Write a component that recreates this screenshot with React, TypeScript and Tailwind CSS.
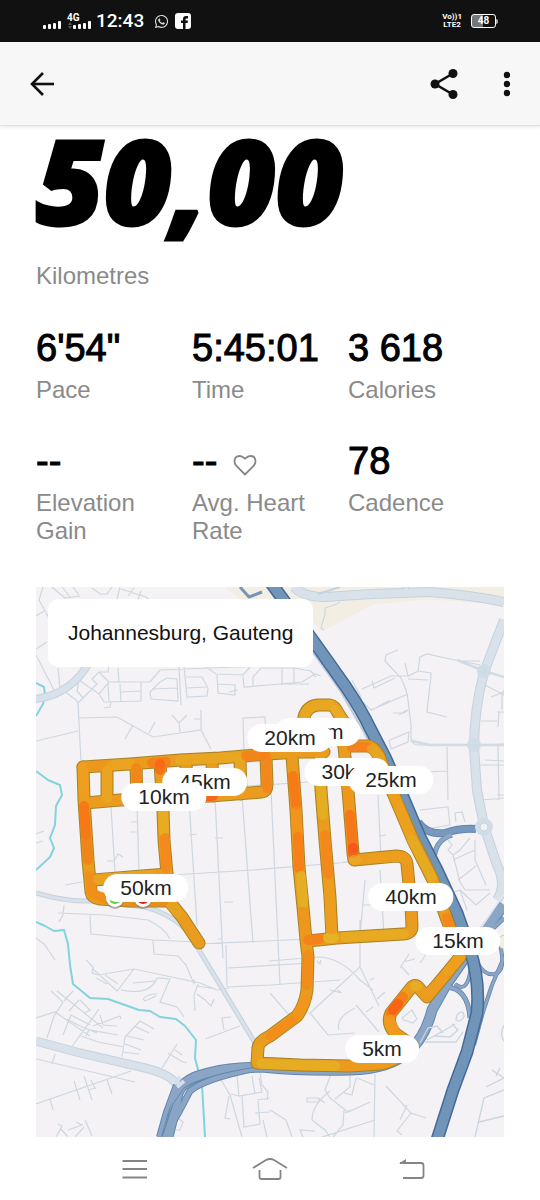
import React from "react";
import { FaWhatsapp } from "react-icons/fa";

type Stat = { value: string; label: string; heart?: boolean };

const stats: Stat[] = [
  { value: "6'54\"", label: "Pace" },
  { value: "5:45:01", label: "Time" },
  { value: "3 618", label: "Calories" },
  { value: "--", label: "Elevation Gain" },
  { value: "--", label: "Avg. Heart Rate", heart: true },
  { value: "78", label: "Cadence" },
];

type Marker = { text: string; x: number; y: number; shape?: string };

// Marker centres in map units; later entries lie over earlier ones.
// Markers that are partly covered keep only the part of the label left in view.
const markers: Marker[] = [
  { text: "m", x: 318, y: 732, shape: "w-[85px] text-right" },
  { text: "20km", x: 290, y: 738 },
  { text: "30k", x: 347, y: 772, shape: "w-[85px] text-left" },
  { text: "25km", x: 391, y: 780 },
  { text: "45km", x: 205, y: 782 },
  { text: "10km", x: 164, y: 797 },
  { text: "50km", x: 146, y: 888 },
  { text: "40km", x: 411, y: 897 },
  { text: "15km", x: 458, y: 941 },
  { text: "5km", x: 382, y: 1049 },
];

const MAP = { x: 36, y: 587, w: 468, h: 550 };

const track = [
  "M83 767 L130 764 L180 760 L220 758 L267 754 L300 752 L324 752",
  "M83 767 L84 800 L88 860 L91 892 Q92 898 100 899 L130 901 L169 901 L182 917 L199 943",
  "M85 803 L120 800 L210 796 L262 792 Q267 791 267 784 L266 756",
  "M107 767 L107 800",
  "M136 765 L137 800",
  "M160 763 L163 810 L164 840 L167 874",
  "M186 762 L187 798",
  "M212 760 L213 796",
  "M240 758 L241 794",
  "M94 880 L130 877 L167 874",
  "M292 756 L296 810 L299 867 L303 907 L306 940 L308 957 L307 990 Q305 1005 297 1016 L270 1036 Q258 1042 258 1048 L257 1063 L300 1065 L350 1066 L380 1064 Q400 1060 412 1045 L396 1034 Q386 1024 391 1013 L399 1003 L411 988 Q415 983 419 988 L427 997 L447 973 L460 957 L463 942",
  "M320 753 L321 790 L325 840 L330 897 L332 937",
  "M306 726 L304 717 Q307 706 318 705 L330 705 Q335 706 338 713 L346 725 L351 740",
  "M344 746 L348 790 L353 853 L354 860 L396 856 Q406 856 407 864 L411 905 L412 926 Q412 934 403 934 L337 938 L308 941",
  "M344 746 L360 746 L368 746 Q374 747 379 756 L393 793 L413 840 L433 880 L447 920 L456 943",
];

const heat: [string, string][] = [
  ["M83 768 L84 795", "#efa11f"],
  ["M84 806 L86 835", "#fb6a13"],
  ["M86 835 L88 860", "#f27d18"],
  ["M90 876 L92 893 L106 899", "#f48a1a"],
  ["M92 767 L110 765", "#f0951d"],
  ["M107 771 L107 798", "#e9a822"],
  ["M112 765 L130 764", "#eda61f"],
  ["M136 768 L137 786", "#f47d17"],
  ["M152 763 L166 762", "#f7761a"],
  ["M160 764 L160 770", "#fb5f12"],
  ["M180 760 L238 757", "#e7ab22"],
  ["M240 760 L241 790", "#e8a923"],
  ["M246 756 L264 755", "#f57c17"],
  ["M266 756 L267 788", "#f5801a"],
  ["M204 796 L213 796", "#f8501c"],
  ["M163 812 L164 832", "#e5b323"],
  ["M165 838 L166 868", "#f6831a"],
  ["M98 879 L150 875", "#e7a621"],
  ["M115 901 L164 901", "#e8881c"],
  ["M172 906 L177 912", "#e5a720"],
  ["M293 776 L296 805", "#fb6d14"],
  ["M296 812 L298 835", "#f3931c"],
  ["M298 837 L299 868", "#fb7615"],
  ["M301 876 L303 903", "#e4b724"],
  ["M303 912 L305 930", "#f0961c"],
  ["M308 940 L320 939", "#fa7817"],
  ["M328 938 L334 938", "#e4bd29"],
  ["M345 937 L404 934", "#e5b022"],
  ["M308 955 L307 985", "#f4871a"],
  ["M306 999 L296 1016", "#f3941b"],
  ["M292 1021 L270 1036", "#f58a1a"],
  ["M258 1050 L257 1060", "#e3a821"],
  ["M262 1064 L335 1066", "#e4b323"],
  ["M348 1066 L384 1063", "#f09a1d"],
  ["M321 788 L323 815", "#e2b523"],
  ["M325 835 L328 874", "#f6821a"],
  ["M329 885 L331 930", "#efa01d"],
  ["M348 790 L351 825", "#f0951c"],
  ["M350 815 L353 848", "#fb6815"],
  ["M353 848 L353 853", "#fb4b19"],
  ["M354 860 L356 860", "#edab25"],
  ["M372 858 L396 857", "#f0a01d"],
  ["M408 870 L409 880", "#ee961c"],
  ["M352 747 L368 747", "#f8761a"],
  ["M372 749 L380 758", "#e4a923"],
  ["M393 793 L410 834", "#eda31e"],
  ["M412 840 L432 878", "#e4b021"],
  ["M447 918 L450 926", "#f5801a"],
  ["M305 716 Q308 706 318 705 L330 705", "#e5ad22"],
  ["M336 710 L344 722", "#eab02a"],
  ["M460 957 L448 971", "#eea31e"],
  ["M442 979 L430 992", "#ee9d1f"],
  ["M415 986 L417 986", "#e6b426"],
  ["M403 997 L391 1013", "#fa7417"],
  ["M398 1004 L393 1010", "#fb5716"],
  ["M390 1020 L396 1033", "#f39a1c"],
];

const streets =
  "M43 587 L39 600 L61 640 M36 616 L44 611 M36 649 L47 642 M36 655 L58 698 M58 668 L60 688 L76 700 L78 703 L81 762 M52 587 L65 598 L80 596 M62 587 L70 597 M73 587 L79 595 M92 588 L100 594 L107 594 L112 587 M120 587 L117 599 M121 589 L146 597 L150 600 M128 596 L134 588 M138 599 L141 591" +
  " M78 703 L97 684 L92 679 L99 672 L109 682 L99 694 L79 680 L77 691 L83 698 M109 682 L150 682 L160 670 L235 667 L270 666 M99 672 L108 672 L109 665 M118 668 L119 683 M108 684 L109 701 M120 684 L121 702 M108 702 L141 701 L141 682 M120 692 L141 691 M99 694 L104 702 L109 702 M104 708 L110 707 L111 701 M150 692 L160 682 L167 678 L177 679 L178 701 L151 699 L150 692 M152 689 L178 688 M179 667 L181 705 M184 666 L187 697 L207 696 L208 688 L202 677 L186 677 M187 688 L207 687 M203 665 L216 674 L243 675 L250 667 M217 675 L218 693 L235 695 L235 685 L217 684 M229 692 L238 690 M243 676 L244 687 L281 684 L309 684 M253 686 L253 677 L261 668 L294 668 L294 684 M282 669 L282 685 M280 684 L302 682 L315 674 L321 676 M294 668 L311 671 L316 677" +
  " M78 718 L117 717 L153 737 L201 730 L211 749 M36 741 L78 731 M125 739 L133 725 M149 733 L155 722 M180 732 L179 723 L172 715 M179 723 L187 715 M201 730 L201 710 M194 719 L201 719 M244 752 L243 718 L265 717 L266 740" +
  " M111 807 L115 872 M137 805 L139 872 M189 801 L197 925 M215 798 L223 958 M242 796 L253 943 M271 790 L280 985 M346 808 L353 852 M378 795 L381 860 M365 880 L360 936 M380 870 L384 935 M172 875 L253 870 L350 862 M199 944 L310 939 M227 987 L226 945 M228 968 L310 963 M228 987 L270 985 M131 822 L138 822 M130 832 L137 832 M189 835 L197 834 M215 838 L223 838 M224 902 L233 902 M218 939 L222 939 M107 861 L114 861 L118 854 L123 857 M65 885 L82 882 M36 834 L44 831 M36 843 L43 841 M247 786 L309 782 M343 862 L390 860 M380 836 L386 835 M372 905 L363 905" +
  " M58 913 L105 915 L148 920 Q165 928 170 939 M64 905 L63 915 L59 922 M90 915 L91 934 L153 940 L197 942 M153 940 L154 954 L178 956 L186 965 L194 984 L194 979 M86 960 L93 967 L92 973 L98 975 L134 969 L200 983 L217 990 L229 988 M92 968 L117 991 L134 969 M96 978 L107 984 M105 975 L118 984 M121 990 Q150 996 157 978 L170 979 L160 1002 L177 1007 L184 1017 M133 983 L155 981 M156 996 L145 1001 L143 999 Q147 994 157 994 M198 984 L194 995 L195 1011 M197 994 L205 1000 L211 1006 L214 999 M197 986 L216 989 M205 1039 L240 1026 M231 1017 L222 1018 L224 1030 M36 938 L45 945 L55 960" +
  " M36 1018 L55 1012 L90 1036 M47 1038 L54 1016 L63 1002 L51 991 M64 1001 L73 991 M57 991 L103 1028 M63 1035 L71 1015 L90 1025 M71 1048 L99 1009 M80 1000 L90 1010 L84 1013 M69 1011 L79 1000 M67 1019 L80 1026 L97 1033 M93 1026 L120 1016 L121 1019 M100 1015 L103 1025 L117 1026 M81 1036 L98 1042 L124 1047 M86 1036 L89 1030 L118 1035 M122 1057 L125 1037 L140 1021 L154 1029 M134 1026 L149 1033 M127 1036 L144 1040 M125 1044 L141 1050 M122 1052 L139 1054 M162 1068 L177 1044 M168 1053 L181 1061 L187 1063 M175 1050 L182 1055" +
  " M36 1104 L131 1071 M36 1059 L135 1082 M52 1064 L55 1054 M74 1081 L80 1100 M84 1076 L92 1100 M88 1090 L96 1088 M107 1080 L112 1094 M91 1080 L95 1088 M50 1099 L53 1110 M56 1137 L62 1126 L58 1124 M60 1128 L68 1137 M68 1130 L82 1125 L76 1122 M75 1137 L84 1127 M85 1120 L92 1136" +
  " M269 961 L318 957 Q340 957 360 980 L373 990 M360 920 L360 967 L309 1014 M360 967 L379 1006 M270 985 L340 980 M330 990 L342 993 M338 990 L341 993 M317 961 L320 964 L321 960 M356 1005 L379 1032 M339 1030 Q335 1018 355 1008 M311 1014 L328 1035 L355 1033 M370 980 L374 978 M366 1012 L373 1007 M377 999 L385 992 M401 966 L409 975 M403 962 L415 959 M420 963 L427 953 M402 1018 L412 1010 L417 1019 L413 1023 L404 1020 Z M270 993 L295 1022 M409 954 L400 968" +
  " M331 1074 L325 1090 L330 1098 L348 1112 L370 1102 M350 1075 L350 1087 L335 1099 M356 1078 L352 1095 L344 1093 M375 1074 L374 1137 M374 1085 L357 1078 M330 1091 Q312 1105 312 1120 L325 1130 L330 1137 M344 1110 L343 1125 L333 1137 M345 1113 L351 1110 M307 1098 L319 1098 L319 1102 L307 1102 Z M386 1086 L411 1113 L426 1118 M411 1113 L397 1131 L402 1135 M407 1105 L400 1120 M325 1103 L318 1098 M315 1131 L300 1130 L303 1137 M270 1110 L286 1120 L292 1137 M313 1140 L375 1120" +
  " M220 1078 L230 1095 L242 1137 M237 1076 L239 1096 L262 1092 L259 1078 M252 1076 L255 1094 M242 1096 L244 1127 L260 1124 L258 1101 M260 1073 L262 1085 L268 1092 L267 1100 M257 1100 L270 1098 M255 1113 L270 1112 M229 1096 L225 1118 L230 1119 M181 1099 L175 1116 L183 1122 L180 1130 L171 1130 M263 1120 L267 1137 M231 1094 L239 1096" +
  " M325 608 L325 614 L321 628 L324 630 M325 608 L337 604 L340 602 M398 650 L386 655 L385 661 L401 678 Q407 690 408 700 L411 725 L411 740 Q412 745 420 745 L465 745 M405 663 L408 676 L418 671 L420 657 L427 654 L450 659 L480 665 M362 689 L391 676 L408 676 M372 681 L374 688 L395 678 M418 671 L431 673 L431 676 L427 712 L447 717 M408 679 L428 680 M352 680 L360 695 L362 702 M363 702 L371 710 L408 694 M372 710 L390 700 M399 715 L407 710 M393 713 L404 713 L408 710 M389 740 L391 749 L408 742 L409 732 L390 740 M447 747 L448 800 M425 772 L448 771 M460 661 L480 661 M504 695 L485 685 M481 721 L497 721 M485 760 L504 761 M480 765 L504 765 M497 712 L504 712 M498 745 L499 800 M499 712 L498 727 M485 745 L504 744 M482 800 L504 798 M497 795 L504 795 M420 810 L448 807 L450 825 L432 828 M456 822 L455 813 L462 812 L465 822 M445 836 L452 845 L448 850 L453 855 L460 850 L470 838 M453 855 L460 882 L465 890 L490 890 M475 840 L475 860 L486 885 M453 860 L475 850 M458 880 L476 866 M446 895 L460 890 L467 910 M460 890 L476 905 L490 893 M491 697 L504 692 M502 710 L502 695 L504 690";

const westRoads =
  "M168 1137 L173 1117 L178 1093 Q182 1082 198 1076 Q220 1069 240 1068 L262 1067 Q300 1071 350 1070 Q390 1069 408 1052 Q425 1038 432 1010 L446 985 L478 939 L504 905";

function Streams() {
  return (
    <g fill="none" stroke="#83d3df" strokeWidth="2" strokeLinejoin="round">
      <path d="M36 771 L48 780 L60 785 L62 795 L56 806 L55 825 L50 838 L54 848 L50 857 L36 870" />
      <path d="M36 922 L45 926 L54 931 L64 930 L68 944 L70 965 L73 984 L90 998 L108 999 L139 1010 L150 1011 L160 1017 L176 1019 L185 1026 L196 1040 L195 1058 L202 1085 L205 1137" />
      <path d="M36 683 L44 687 L45 695 L43 704 L36 716" />
    </g>
  );
}

function RouteMap() {
  return (
    <svg
      viewBox="36 587 468 550"
      className="block h-auto w-full"
      role="img"
      aria-label="Route map"
    >
      <rect x="36" y="587" width="468" height="550" fill="#f4f2f4" />
      <path d="M225 587 L504 587 L504 604 L420 600 L370 606 L322 632 L312 620 L240 600 Z" fill="#f3eee4" />
      <path d="M315 635 L375 604 L440 600 L504 606 L504 700 L340 690 Z" fill="#f4f2f4" />
      <path d={streets} fill="none" stroke="#ced7e0" strokeWidth="1.2" />
      <Streams />

      <g fill="none" strokeLinecap="butt">
        <g stroke="#c5d1dd">
          <path d="M36 699 Q72 694 90 661" strokeWidth="8" />
          <path d="M36 893 Q65 902 90 901 L145 907 Q175 915 190 935 L255 1043" strokeWidth="5" />
          <path d="M36 1041 L80 1053 L145 1068 Q170 1074 176 1084" strokeWidth="9" />
          <path d="M294 587 Q303 597 325 597 L372 594 L430 592 Q470 595 504 602" strokeWidth="10" />
          <path d="M406 587 L406 594" strokeWidth="6" />
          <path d="M504 620 L484 672 Q474 710 474 748 L477 790 L484 826 L497 865 Q507 885 497 900" strokeWidth="10" />
        </g>
        <g stroke="#d9e2ea">
          <path d="M36 699 Q72 694 90 661" strokeWidth="6" />
          <path d="M36 893 Q65 902 90 901 L145 907 Q175 915 190 935 L255 1043" strokeWidth="3" />
          <path d="M36 1041 L80 1053 L145 1068 Q170 1074 176 1084" strokeWidth="7" />
          <path d="M294 587 Q303 597 325 597 L372 594 L430 592 Q470 595 504 602" strokeWidth="8" />
          <path d="M406 587 L406 594" strokeWidth="4" />
          <path d="M504 620 L484 672 Q474 710 474 748 L477 790 L484 826 L497 865 Q507 885 497 900" strokeWidth="8" />
        </g>
      </g>
      <path d="M318 594 L340 587" stroke="#c5d1dd" strokeWidth="2" />
      <circle cx="484" cy="671" r="7" fill="#d0dce6" />
      <circle cx="484" cy="671" r="2" fill="#f3f2f4" stroke="#b9c7d4" strokeWidth="0.7" />
      <circle cx="474" cy="745" r="7" fill="#d0dce6" />
      <path d="M457 660 L484 671 L504 677 M412 741 L430 745 L504 745" fill="none" stroke="#cfdbe5" strokeWidth="2.5" />

      <g fill="none" strokeLinejoin="round">
        <g stroke="#6485ad">
          <path d={westRoads} strokeWidth="11" />
          <path d="M164 1137 L179 1112 L190 1091 Q205 1078 262 1067" strokeWidth="7" />
          <path d="M159 1137 L166 1112 L176 1085" strokeWidth="6" />
          <path d="M418 822 Q427 835 445 833 Q460 828 476 829" strokeWidth="8" />
          <path d="M434 862 Q434 840 452 835" strokeWidth="5" />
          <path d="M504 918 Q485 935 474 950" strokeWidth="5" />
          <path d="M446 987 Q468 988 470 1018" strokeWidth="5" />
          <path d="M455 984 Q468 995 471 966" strokeWidth="4" />
          <path d="M498 938 Q508 970 495 974 Q485 976 478 964" strokeWidth="4" />
          <path d="M504 957 L492 985 L483 1012 L474 1045" strokeWidth="4" />
        </g>
        <g stroke="#8aa5c5">
          <path d={westRoads} strokeWidth="9" />
          <path d="M164 1137 L179 1112 L190 1091 Q205 1078 262 1067" strokeWidth="5" />
          <path d="M159 1137 L166 1112 L176 1085" strokeWidth="4" />
          <path d="M418 822 Q427 835 445 833 Q460 828 476 829" stroke="#7898bd" strokeWidth="6" />
          <path d="M434 862 Q434 840 452 835" strokeWidth="3.5" />
          <path d="M504 918 Q485 935 474 950" strokeWidth="3.5" />
          <path d="M446 987 Q468 988 470 1018" strokeWidth="3.5" />
          <path d="M455 984 Q468 995 471 966" strokeWidth="2.5" />
          <path d="M498 938 Q508 970 495 974 Q485 976 478 964" strokeWidth="2.5" />
          <path d="M504 957 L492 985 L483 1012 L474 1045" strokeWidth="2.5" />
        </g>
        <path d="M162 1137 L173 1104 L184 1088 Q200 1076 262 1066" stroke="#6485ad" strokeWidth="1" />
        <path d="M504 894 L480 929" stroke="#dfe6ee" strokeWidth="2" />
        <path d="M240 587 L249 597 L262 592" stroke="#7795b9" strokeWidth="3" />
        <path
          d="M262 580 L300 634 L341 692 L364 732 L386 778"
          stroke="#bccadb"
          strokeWidth="2"
        />
        <path
          d="M269 580 L317 646 L346 687 Q362 711 370 728 L385 757 L403 797 L420 837 L437 870 L457 913 L470 950 Q480 980 477 1013 L467 1052 L453 1090 L437 1140"
          stroke="#456a99"
          strokeWidth="13"
        />
        <path
          d="M269 580 L317 646 L346 687 Q362 711 370 728 L385 757 L403 797 L420 837 L437 870 L457 913 L470 950 Q480 980 477 1013 L467 1052 L453 1090 L437 1140"
          stroke="#7095b8"
          strokeWidth="10"
        />
      </g>
      <path d="M176 1084 L180 1077 M177 1087 L184 1081" stroke="#d3dfe9" strokeWidth="4" />
      <circle cx="484" cy="827" r="9" fill="#d0dde8" />
      <circle cx="484" cy="827" r="4" fill="#f1f2f0" stroke="#b9c7d4" strokeWidth="0.7" />
      <circle cx="505" cy="942" r="7" fill="#f3eee0" stroke="#c5cbd0" />
      <path
        d="M420 1043 L428 1028 L437 1026 L443 1033 M427 1040 L445 1030 L455 1024 M435 1036 L450 1037 L458 1030 L452 1024 M457 1015 Q464 1008 464 1017 Q460 1023 456 1020 Z M425 1042 L456 1042 L463 1032 M504 1025 Q499 1035 504 1041 M486 1087 L504 1078 M492 1070 L504 1078 M496 1076 L500 1068 M475 1137 L484 1098 L504 1090 M479 1122 L504 1116"
        fill="none"
        stroke="#cbd5df"
        strokeWidth="1.3"
      />

      <g fill="none" strokeLinecap="round" strokeLinejoin="round">
        {track.map((d) => (
          <path key={d} d={d} stroke="#a58326" strokeWidth="13" />
        ))}
        {track.map((d) => (
          <path key={d} d={d} stroke="#ea9c1e" strokeWidth="11" />
        ))}
        {heat.map(([d, color]) => (
          <path key={d} d={d} stroke={color} strokeWidth="10" strokeOpacity="0.7" />
        ))}
      </g>

      <g>
        <circle cx="115" cy="900" r="9" fill="#8d8170" opacity="0.6" />
        <circle cx="143" cy="900" r="9" fill="#8d8170" opacity="0.6" />
        <circle cx="115" cy="898" r="9" fill="#fff" />
        <circle cx="143" cy="898" r="9" fill="#fff" />
        <circle cx="115" cy="898" r="6" fill="#55d43c" />
        <circle cx="143" cy="898" r="6" fill="#e01f1f" />
      </g>
    </svg>
  );
}

function StatusBar() {
  return (
    <div className="flex h-[42px] items-center justify-between bg-[#111111] pl-[43px] pr-[42px] text-white">
      <div className="flex items-center">
        <svg width="49" height="18" viewBox="0 0 49 18" aria-hidden="true">
          <g fill="#fff">
            <rect x="0" y="13" width="3" height="4" rx="1" />
            <rect x="5" y="12" width="3" height="5" rx="1" />
            <rect x="10" y="11" width="3" height="6" rx="1" />
            <rect x="15" y="9" width="3" height="8" rx="1" />
            <rect x="30" y="13" width="3" height="4" rx="1" />
            <rect x="35" y="12" width="3" height="5" rx="1" />
            <rect x="40" y="11" width="3" height="6" rx="1" />
            <rect x="45" y="9" width="3" height="8" rx="1" />
          </g>
          <path d="M25 13 L27 10 L29 13 M25 14 L27 17 L29 14" fill="#555" />
          <text x="24" y="9" fill="#fff" fontSize="10" fontWeight="700" fontFamily="Roboto, sans-serif">
            4G
          </text>
        </svg>
        <span className="ml-[4px] font-[Roboto,sans-serif] text-[19px] leading-6 font-medium">12:43</span>
        <FaWhatsapp className="ml-[10px] h-[15px] w-[15px] text-[#dddddd]" aria-hidden="true" />
        <svg width="16" height="16" viewBox="0 0 16 16" className="ml-[6px]" aria-hidden="true">
          <rect width="16" height="16" rx="3" fill="#fff" />
          <path d="M8 16 V10 H6 V7.4 H8 V6 Q8 3 11 3 H13 V5.4 H11.7 Q10.5 5.4 10.5 6.6 V7.4 H13 L12.6 10 H10.5 V16 Z" fill="#111" />
        </svg>
      </div>
      <div className="flex items-center gap-[9px]">
        <div className="flex flex-col items-center font-[Roboto,sans-serif] text-[8px] leading-[8px] font-bold">
          <span>Vo))1</span>
          <span>LTE2</span>
        </div>
        <div className="flex items-center">
          <div className="flex h-[14px] w-[25px] items-center justify-center rounded-[3px] border border-white bg-linear-to-r from-[#777777] from-48% to-[#111111] to-48% font-[Roboto,sans-serif] text-[10px] leading-3 font-bold">
            48
          </div>
          <div className="h-[5px] w-[2px] rounded-r bg-[#aaaaaa]" />
        </div>
      </div>
    </div>
  );
}

function Header() {
  return (
    <header className="flex h-[84px] items-center justify-between border-b border-[#e0e0e0] bg-[#f7f7f7] pr-6 pl-[30px] shadow-[0_1px_4px_rgba(0,0,0,0.1)]">
      <button type="button" aria-label="Back">
        <svg width="24" height="24" viewBox="0 0 24 24" fill="none" stroke="#111" strokeWidth="2.6">
          <path d="M24 12 H2" />
          <path d="M13 1 L2 12 L13 23" />
        </svg>
      </button>
      <div className="flex items-center gap-10">
        <button type="button" aria-label="Share">
          <svg width="28" height="30" viewBox="0 0 28 30" fill="#111">
            <path d="M23 4.500 L5 15 L23 25.500" fill="none" stroke="#111" strokeWidth="2.6" />
            <circle cx="23" cy="4.500" r="4.500" />
            <circle cx="5" cy="15" r="4.500" />
            <circle cx="23" cy="25.500" r="4.500" />
          </svg>
        </button>
        <button type="button" aria-label="More options" className="px-[6px]">
          <svg width="14" height="26" viewBox="0 0 14 26" fill="#111" className="-mx-1">
            <circle cx="7" cy="4" r="3.200" />
            <circle cx="7" cy="13" r="3.200" />
            <circle cx="7" cy="22" r="3.200" />
          </svg>
        </button>
      </div>
    </header>
  );
}

function Heart() {
  return (
    <svg
      width="24"
      height="22"
      viewBox="0 0 24 22"
      fill="none"
      stroke="#858585"
      strokeWidth="1.8"
      className="mt-2"
      aria-hidden="true"
    >
      <path d="M12 20.500 L3.200 11.700 Q1.500 9.800 1.500 7.300 Q1.500 2 6.700 2 Q9 2 12 4.700 Q15 2 17.300 2 Q22.500 2 22.500 7.300 Q22.500 9.800 20.800 11.700 Z" />
    </svg>
  );
}

function NavBar() {
  return (
    <nav className="flex h-[63px] items-center justify-between px-[107px]">
      <button type="button" aria-label="Recent apps" className="flex w-14 justify-center">
        <svg width="26" height="22" viewBox="0 0 26 22" stroke="#858585" strokeWidth="1.8">
          <path d="M0.500 3 H25 M0.500 11 H25 M0.500 19.500 H25" />
        </svg>
      </button>
      <button type="button" aria-label="Home" className="flex w-14 justify-center">
        <svg width="36" height="24" viewBox="0 0 36 24" fill="none" stroke="#858585" strokeWidth="1.8">
          <path d="M1 11 L14 3 Q18 1 22 3 L35 11" />
          <path d="M7.500 13 V20 Q7.500 22 9.500 22 H26.500 Q28.500 22 28.500 20 V13" />
        </svg>
      </button>
      <button type="button" aria-label="Back to previous screen" className="flex w-14 justify-end pr-2">
        <svg width="26" height="22" viewBox="0 0 26 22" fill="none" stroke="#858585" strokeWidth="1.800">
          <path d="M1 5 H22 Q24.500 5 24.500 7.500 V17.500 Q24.500 20 22 20 H4" />
          <path d="M0 5.500 L7 1 V5.500 Z" fill="#858585" stroke="none" />
        </svg>
      </button>
    </nav>
  );
}

export default function App() {
  return (
    <div className="bg-white font-['Liberation_Sans',Arial,sans-serif] text-black">
      <StatusBar />
      <Header />
      <main className="px-9">
        <h1 className="h-[136px] font-['Open_Sans',sans-serif] text-[117px] leading-[108px] font-extrabold italic [-webkit-text-stroke:3px_black]">
          50,00
        </h1>
        <p className="text-2xl leading-7 text-[#8a8a8a]">Kilometres</p>
        <dl className="mt-9 grid grid-cols-3 gap-y-[35px]">
          {stats.map((s) => (
            <div key={s.label} className="flex flex-col-reverse justify-end gap-[6px]">
              <dt className="max-w-[130px] text-2xl leading-7 text-[#8a8a8a]">{s.label}</dt>
              <dd className="flex h-11 items-center gap-4 text-[38px] leading-[44px] whitespace-nowrap [-webkit-text-stroke:1px_black]">
                {s.value}
                {s.heart && <Heart />}
              </dd>
            </div>
          ))}
        </dl>
        <section className="relative mt-[42px] overflow-hidden" aria-label="Route">
          <RouteMap />
          {markers.map((m) => (
            <span
              key={m.text}
              className={`absolute -translate-x-1/2 -translate-y-1/2 rounded-full bg-white px-[17px] text-[21px] leading-7 text-[#222222] ${m.shape ?? ""}`}
              style={{
                left: `${((m.x - MAP.x) / MAP.w) * 100}%`,
                top: `${((m.y - MAP.y) / MAP.h) * 100}%`,
              }}
            >
              {m.text}
            </span>
          ))}
          <div className="absolute top-3 left-3 rounded-[10px] bg-white px-5 py-5 text-[21px] leading-7 text-[#111111]">
            Johannesburg, Gauteng
          </div>
        </section>
      </main>
      <NavBar />
    </div>
  );
}
